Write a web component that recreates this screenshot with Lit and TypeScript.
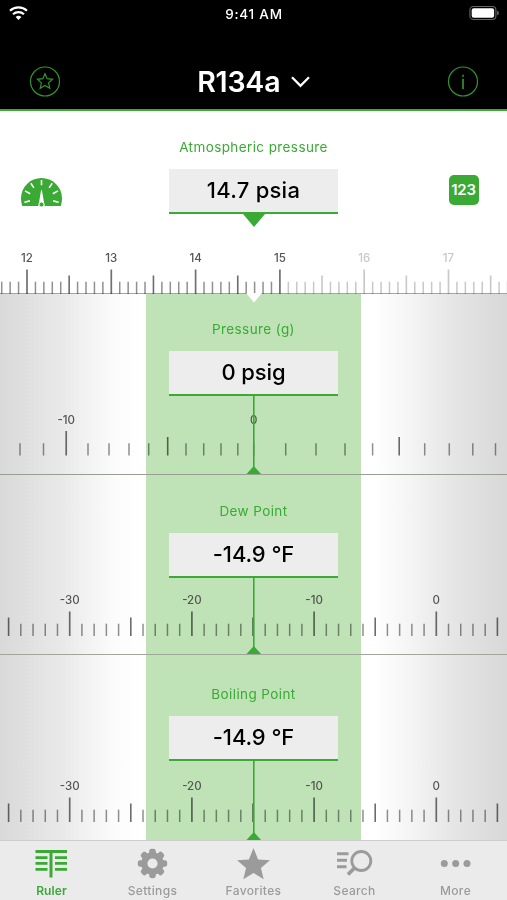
import { LitElement, html, svg, css } from "lit";
import { customElement, property } from "lit/decorators.js";

type Size = "major" | "mid" | "minor";
interface Tick { x: number; size: Size; label?: string; faded?: boolean; }

const sizeOf = (i: number): Size => (i % 10 === 0 ? "major" : i % 5 === 0 ? "mid" : "minor");

function atmosphericScale(): Tick[] {
  const out: Tick[] = [];
  for (let i = -3; i <= 57; i++) {
    const size = sizeOf(i);
    out.push({ x: 27 + i * 8.43, size, label: size === "major" ? String(12 + i / 10) : undefined, faded: i > 30 });
  }
  return out;
}

function temperatureScale(): Tick[] {
  const out: Tick[] = [];
  for (let t = -35; t <= 5; t++) {
    const size = sizeOf(t);
    out.push({ x: 436.3 + t * 12.22, size, label: size === "major" ? String(t) : undefined });
  }
  return out;
}

function gaugeScale(): Tick[] {
  const minor = [20, 43.5, 88, 109, 129, 148.7, 186, 203.7, 221, 237.8, 285.7, 316, 345, 372.6, 424.7, 449.3, 472.8, 495.5];
  return [
    ...minor.map((x): Tick => ({ x, size: "minor" })),
    { x: 66.2, size: "major", label: "-10" },
    { x: 167.7, size: "mid" },
    { x: 253.7, size: "minor", label: "0" },
    { x: 399.2, size: "mid" },
  ];
}

@customElement("scale-panel")
export class ScalePanel extends LitElement {
  @property() label = "";
  @property() value = "";
  @property() kind = "";
  @property({ attribute: false }) ticks: Tick[] = [];
  @property({ type: Number }) height = 78;
  @property({ type: Number }) base = 60;

  static styles = css`
    :host { display: flex; flex-direction: column; align-items: center; position: relative; box-sizing: border-box; }
    .label { font-size: 13.5px; line-height: 16px; letter-spacing: 0.4px; color: #3aaa35; white-space: nowrap; }
    .value { box-sizing: border-box; width: 168.5px; height: 45px; background: #ededed; border-bottom: 2.5px solid #3aaa35;
      display: flex; align-items: center; justify-content: center; color: #000; font-size: 22px; font-weight: 450; letter-spacing: -0.1px;
      margin-top: 14px; white-space: pre; flex: none; padding-bottom: 1px; }
    .value.top { letter-spacing: 0.25px; }
    svg { display: block; flex: none; width: 507px; }
    .num { font-size: 11.5px; font-weight: 500; letter-spacing: 0; text-anchor: middle; fill: #555; }
    .num.faded { fill: #c8c8c8; }
    .tick { stroke: #909090; stroke-width: 1.5; mix-blend-mode: multiply; }
    .tick.mid { stroke: #6c6c6c; stroke-width: 1.6; }
    .tick.major { stroke: #707070; stroke-width: 1.7; }
    .tick.faded { stroke: #c8c8c8; }
    .mark { fill: #3aaa35; }
    .stem { stroke: #3aaa35; stroke-width: 1.6; }
  `;

  render() {
    const b = this.base;
    const len = { major: 24.5, mid: 18.5, minor: 12.3 };
    const top = this.kind === "top";
    return html`
      <div class="label">${this.label}</div>
      <div class="value ${this.kind}">${this.value}</div>
      <svg height=${this.height} viewBox="0 0 507 ${this.height}">
        ${this.ticks.map((t) => svg`
          <line class="tick ${t.size} ${t.faded ? "faded" : ""}" x1=${t.x} x2=${t.x} y1=${b - len[t.size]} y2=${b}></line>
          ${t.label ? svg`<text class="num ${t.faded ? "faded" : ""}" x=${t.x} y=${b - 32}>${t.label}</text>` : ""}`)}
        ${top
          ? svg`<path class="mark" d="M243 0H265L254 13Z"></path>`
          : svg`<path class="stem" d="M253.8 0V${this.height}"></path>
              <path class="mark" d="M246.5 ${this.height}L253.8 ${this.height - 8}L261.1 ${this.height}Z"></path>`}
      </svg>`;
  }
}

@customElement("app-root")
export class AppRoot extends LitElement {
  static styles = css`
    :host { display: flex; flex-direction: column; width: 507px; height: 900px; overflow: hidden; background: #fff;
      font-family: Inter, "Liberation Sans", sans-serif; }
    header { height: 111px; box-sizing: border-box; background: #000; border-bottom: 2.5px solid #3aaa35; color: #fff; flex: none; }
    .status { height: 28px; display: grid; grid-template-columns: 1fr auto 1fr; align-items: center; padding: 0 8px 0 9px; }
    .status svg, .title svg, .nav svg { display: block; }
    .status > svg { position: relative; top: -1px; }
    .clock { font-size: 13.5px; font-weight: 500; letter-spacing: 0.75px; }
    .battery { justify-self: end; }
    .nav { display: flex; justify-content: space-between; align-items: center; height: 80px; box-sizing: border-box; padding: 27px 28.5px 0 29px; }
    .title { display: flex; align-items: center; gap: 11px; font-size: 28.5px; font-weight: 600; letter-spacing: -0.2px; }
    .first { height: 183px; padding-top: 28px; flex: none; border-bottom: 1.5px solid #a6a6a6; }
    .area { position: relative; flex: none; }
    .side { position: absolute; }
    .gauge { left: 21px; top: 66px; }
    .digits { left: 448.5px; top: 63.5px; width: 30px; height: 30px; border-radius: 5px; background: #3aaa35; color: #fff;
      display: flex; align-items: center; justify-content: center; font-size: 15px; font-weight: 600; letter-spacing: -0.3px; }
    .body { flex: none; height: 546px; position: relative; display: flex; flex-direction: column;
      background: linear-gradient(90deg, transparent 146.5px, #bfe3b6 146.5px, #bfe3b6 361px, transparent 361px),
        linear-gradient(90deg, #d9d9d9 0, #e9e9e9 62px, #fcfcfc 115px, #fff 146px, #fff 375px, #f6f6f6 405px, #e5e5e5 455px, #d8d8d8 507px); }
    .p1 { height: 181px; padding-top: 27px; border-bottom: 1.5px solid #95a090; }
    .p2 { height: 180px; padding-top: 28px; border-bottom: 1.5px solid #9fa79b; }
    .p3 { height: 185px; padding-top: 31px; }
    .notch { position: absolute; left: 246px; top: -1.5px; }
    nav { flex: none; height: 60px; box-sizing: border-box; border-top: 1px solid #cdcdcd; background: #ebebeb; display: grid; grid-template-columns: repeat(5, 101px); padding-left: 0.5px; }
    .tab { display: flex; flex-direction: column; align-items: center; color: #9b9b9b; font-size: 12px; font-weight: 500; letter-spacing: 0.35px; padding-top: 6px; }
    .tab svg { display: block; width: 40px; height: 34px; flex: none; }
    .tab span { line-height: 15px; margin: 2px 0 0 1px; }
    .tab.on { color: #3aaa35; font-weight: 600; letter-spacing: 0.1px; }
  `;

  private tab(name: string, icon: unknown, on = false) {
    return html`<div class="tab ${on ? "on" : ""}"><svg viewBox="0 0 40 34">${icon}</svg><span>${name}</span></div>`;
  }

  render() {
    const teeth = [0, 45, 90, 135, 180, 225, 270, 315];
    return html`
      <header>
        <div class="status">
          <svg width="20" height="15" viewBox="0 0 20 15" fill="none" stroke="#fff" stroke-width="2.2">
            <path d="M1 4.8A12.5 12.5 0 0 1 18 4.8M4 8.2A8.2 8.2 0 0 1 15 8.2"></path>
            <path d="M6.6 11Q9.5 8.7 12.4 11L9.5 14Z" fill="#fff" stroke="none"></path>
          </svg>
          <div class="clock">9:41 AM</div>
          <svg class="battery" width="30" height="16" viewBox="0 0 30 16">
            <rect x=".9" y="1.5" width="26" height="13" rx="3.5" fill="none" stroke="#666" stroke-width="1.1"></rect>
            <rect x="2.7" y="3.3" width="22.4" height="9.4" rx="2" fill="#fff"></rect>
            <path d="M28.2 5.7Q29.8 6.3 29.8 8T28.2 10.3Z" fill="#777"></path>
          </svg>
        </div>
        <div class="nav">
          <svg width="32" height="32" viewBox="0 0 32 32" fill="none" stroke="#32942d" stroke-width="1.2">
            <circle cx="16" cy="15.5" r="14.5"></circle>
            <path d="M16 7.7L18.2 12.7L23.6 13.3L19.6 16.9L20.8 22.3L16 19.5L11.2 22.3L12.4 16.9L8.4 13.3L13.8 12.7Z"></path>
          </svg>
          <div class="title"><span>R134a</span>
            <svg width="19" height="12" viewBox="0 0 19 12" fill="none" stroke="#fff" stroke-width="2.3"><path d="M1 1.2L9.5 9.8L18 1.2"></path></svg>
          </div>
          <svg width="32" height="32" viewBox="0 0 32 32" fill="none" stroke="#32942d" stroke-width="1.2">
            <circle cx="16" cy="15.5" r="14.5"></circle>
            <path d="M16 12.7V23M16 8.7V10.7" stroke-width="1.7"></path>
          </svg>
        </div>
      </header>

      <div class="area">
        <scale-panel class="first" kind="top" label="Atmospheric pressure" value="14.7 psia" .ticks=${atmosphericScale()} .height=${80} .base=${80}></scale-panel>
        <svg class="side gauge" width="41" height="31" viewBox="0 0 41 31">
          <path d="M1.2 29Q0 25.5 0 21.2A20.5 20.2 0 0 1 41 21.2Q41 25.5 39.8 29Z" fill="#3aaa35"></path>
          <path d="M20.5 3V8.3M9.8 6.2L12.9 10.9M4 13.9L9.2 16.8M3.4 25.3L8.9 23.9M31.2 6.2L28.1 10.9M37 13.9L31.8 16.8M37.6 25.3L32.1 23.9" fill="none" stroke="#fff" stroke-width="1.6"></path>
          <path d="M20.1 13H20.9L23.6 29H17.4Z" fill="#fff"></path>
          <circle cx="20.5" cy="27.5" r="2.5" fill="#3aaa35" stroke="#fff" stroke-width="0.9"></circle>
        </svg>
        <div class="side digits">123</div>
      </div>

      <div class="body">
        <svg class="notch" width="16" height="10" viewBox="0 0 16 10"><path d="M0 0H16L8 9.5Z" fill="#fff"></path></svg>
        <scale-panel class="p1" label="Pressure (g)" value="0 psig" .ticks=${gaugeScale()} .height=${78} .base=${59.5}></scale-panel>
        <scale-panel class="p2" label="Dew Point" value="-14.9 °F" .ticks=${temperatureScale()} .height=${76} .base=${58}></scale-panel>
        <scale-panel class="p3" label="Boiling Point" value="-14.9 °F" .ticks=${temperatureScale()} .height=${79} .base=${61}></scale-panel>
      </div>

      <nav>
        ${this.tab("Ruler", svg`<path d="M4.5 4.5H36M20 4.5V30.5" fill="none" stroke="currentColor" stroke-width="3"></path>
          <path d="M4.5 10.6H16.5M24 10.6H36M4.5 16.4H16.5M24 16.4H36M4.5 22.4H16.5M24 22.4H36" fill="none" stroke="currentColor" stroke-width="2.8"></path>`, true)}
        ${this.tab("Settings", svg`<circle cx="20.5" cy="16.5" r="8.2" fill="none" stroke="currentColor" stroke-width="6.2"></circle>
          ${teeth.map((a) => svg`<rect x="17.2" y="1.8" width="6.6" height="7" rx="2.4" fill="currentColor" transform="rotate(${a} 20.5 16.5)"></rect>`)}`)}
        ${this.tab("Favorites", svg`<path d="M20.5 1L25.1 12.4L37 13.2L27.9 21L30.7 32.2L20.5 26L10.3 32.2L13.1 21L4 13.2L15.9 12.4Z" fill="currentColor"></path>`)}
        ${this.tab("Search", svg`<g fill="none" stroke="currentColor"><circle cx="27.3" cy="14" r="9.5" stroke-width="2.8"></circle>
          <path d="M21 20.5L14 27.5" stroke-width="3.8"></path><path d="M3 6.8H14.5M3 13.3H13M3 19.8H12.5" stroke-width="3"></path></g>`)}
        ${this.tab("More", svg`<g fill="currentColor"><circle cx="9.3" cy="16.5" r="3.5"></circle><circle cx="20.7" cy="16.5" r="3.5"></circle><circle cx="32" cy="16.5" r="3.5"></circle></g>`)}
      </nav>`;
  }
}
